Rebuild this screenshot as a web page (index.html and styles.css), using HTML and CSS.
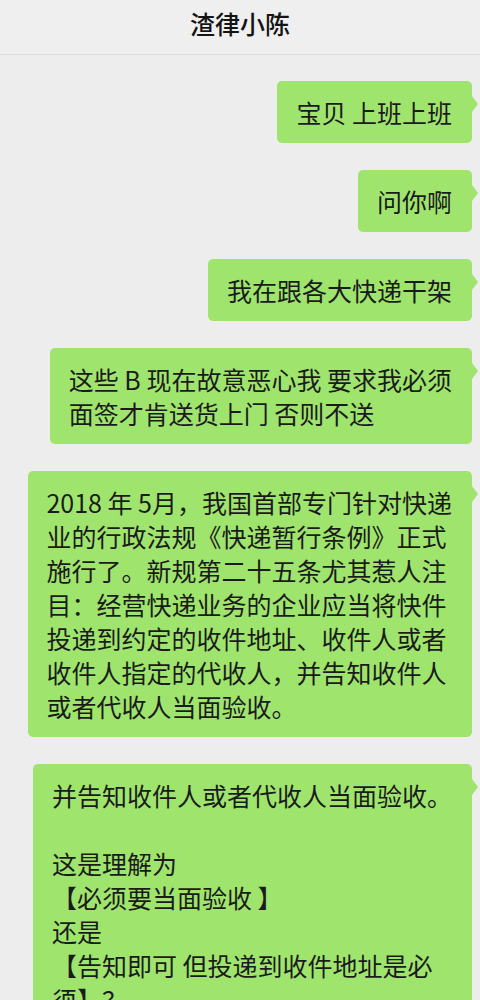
FILE: index.html
```html
<!DOCTYPE html>
<html lang="zh-CN">
<head>
<meta charset="utf-8">
<title>渣律小陈</title>
<link rel="stylesheet" href="styles.css">
</head>
<body>
<header class="topbar">
  <h1 class="title">渣律小陈</h1>
</header>
<main class="chat">
  <div class="bubble">宝贝 上班上班</div>
  <div class="bubble">问你啊</div>
  <div class="bubble">我在跟各大快递干架</div>
  <div class="bubble">这些 B 现在故意恶心我 要求我必须<br>面签才肯送货上门 否则不送</div>
  <div class="bubble bubble-wide">2018 年 5月，我国首部专门针对快递<br>业的行政法规《快递暂行条例》正式<br>施行了。新规第二十五条尤其惹人注<br>目：经营快递业务的企业应当将快件<br>投递到约定的收件地址、收件人或者<br>收件人指定的代收人，并告知收件人<br>或者代收人当面验收。</div>
  <div class="bubble">并告知收件人或者代收人当面验收。<br><br>这是理解为<br>【必须要当面验收 】<br>还是<br>【告知即可 但投递到收件地址是必<br>须】？</div>
</main>
</body>
</html>
```

FILE: styles.css
```css
html, body {
  margin: 0;
  padding: 0;
}

body {
  background: #ededed;
  font-family: "Noto Sans CJK SC", "Noto Sans", sans-serif;
  color: #1b1b1b;
  overflow: hidden;
}

.topbar {
  height: 55px;
  box-sizing: border-box;
  display: flex;
  align-items: center;
  justify-content: center;
  padding-bottom: 8px;
  background: #efefef;
  border-bottom: 1px solid #dcdcdc;
}

.title {
  margin: 0;
  font-size: 25px;
  font-weight: 500;
  color: #141414;
  letter-spacing: 0;
}

.chat {
  display: flex;
  flex-direction: column;
  align-items: flex-end;
  gap: 27px;
  padding: 26px 8px 0 8px;
}

.bubble {
  position: relative;
  background: #9fe56d;
  border-radius: 5px;
  padding: 14px 20px 14px 19px;
  font-size: 25px;
  line-height: 34px;
  white-space: nowrap;
}

.bubble-wide {
  padding-left: 18px;
}

.bubble::after {
  content: "";
  position: absolute;
  right: -6px;
  top: 15px;
  width: 0;
  height: 0;
  border-top: 8px solid transparent;
  border-bottom: 8px solid transparent;
  border-left: 6px solid #9fe56d;
}
```
